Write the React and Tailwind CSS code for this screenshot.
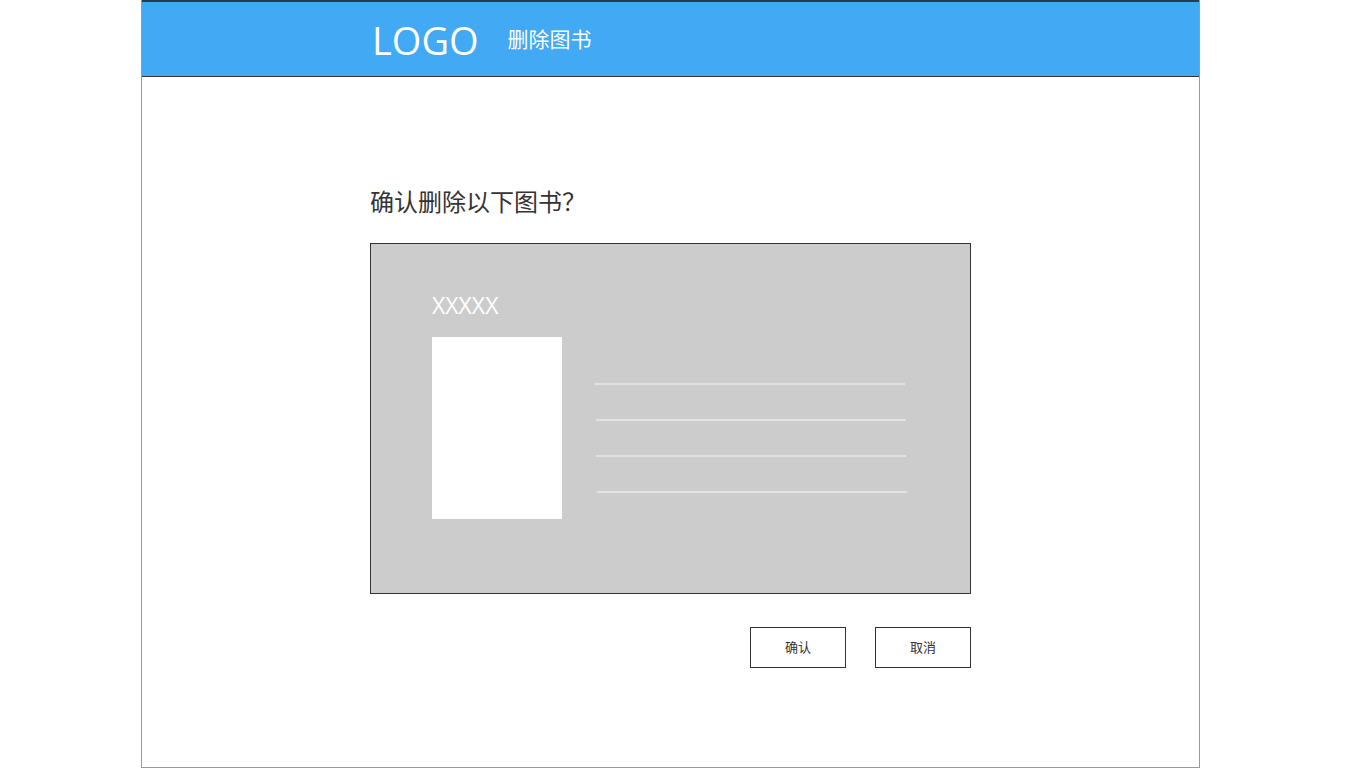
const FONT = "font-['Open_Sans','Noto_Sans_CJK_SC',sans-serif]";

const DETAIL_LINES = ['ml-0', 'ml-px', 'ml-px', 'ml-[2px]'];

function Header() {
	return (
		<header className="h-[77px] bg-[#42a9f5] border-t-2 border-b border-t-[#2a3a4a] border-b-[#333333] flex items-center pl-[230px]">
			<span className="text-white text-[38px] leading-none mt-[2px]">LOGO</span>
			<span className="text-white text-[21px] leading-none ml-[29px]">删除图书</span>
		</header>
	);
}

function BookCard() {
	return (
		<div className="w-[601px] h-[351px] bg-[#cccccc] border border-[#333333] pt-[48px] pl-[61px]">
			<div className="text-white text-[23px] leading-[26px]">XXXXX</div>
			<div className="flex mt-[19px]">
				<div className="w-[130px] h-[182px] bg-white" />
				<div className="flex flex-col gap-[34px] pt-[46px] ml-[33px]">
					{DETAIL_LINES.map((cls, i) => (
						<div key={i} className={`w-[310px] h-[2px] bg-[#e2e2e2] ${cls}`} />
					))}
				</div>
			</div>
		</div>
	);
}

export default function App() {
	return (
		<div className={`w-[1366px] h-[768px] bg-white ${FONT}`}>
			<div className="ml-[141px] w-[1059px] h-[768px] border-l border-r border-b border-[#9a9a9a] flex flex-col">
				<Header />
				<main className="pl-[228px] pt-[109px]">
					<h1 className="text-[#333333] text-[24px] leading-[32px]">确认删除以下图书？</h1>
					<div className="mt-[25px]">
						<BookCard />
					</div>
					<div className="flex justify-end gap-[29px] w-[601px] mt-[33px]">
						<button className="w-[96px] h-[41px] border border-[#333333] text-[13px] text-[#333333] bg-white">确认</button>
						<button className="w-[96px] h-[41px] border border-[#333333] text-[13px] text-[#333333] bg-white">取消</button>
					</div>
				</main>
			</div>
		</div>
	);
}
